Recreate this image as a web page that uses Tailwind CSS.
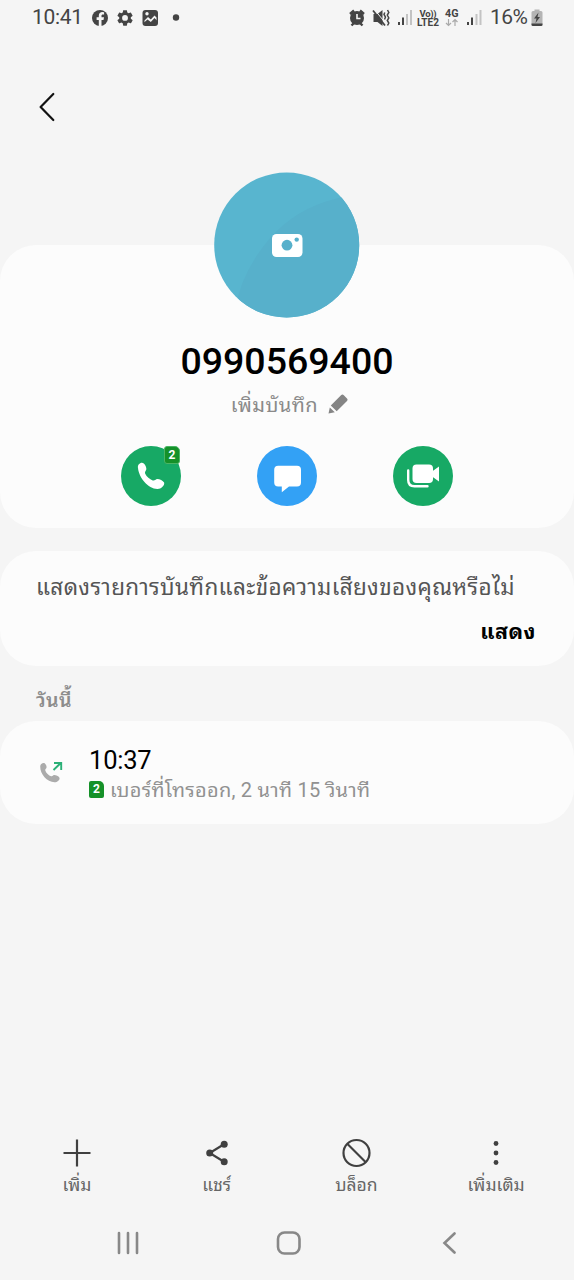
<!DOCTYPE html>
<html lang="th">
<head>
<meta charset="utf-8">
<title>0990569400</title>
<script src="https://cdn.jsdelivr.net/npm/@tailwindcss/browser@4"></script>
</head>
<body class="bg-[#f5f5f5]">
<div class="w-[574px] h-[1280px] flex flex-col overflow-hidden bg-[#f5f5f5] font-[Roboto,'Noto_Sans_Thai_Looped','Noto_Looped_Thai','Droid_Sans_Thai',Loma,Waree,Garuda,'Noto_Sans_Thai',sans-serif] text-[#444]">

  <!-- status bar -->
  <header class="h-9 shrink-0 flex justify-between pl-8 pr-[30px]">
    <div class="flex items-center">
      <span class="w-[60px] text-[21px] leading-[34px] h-9 whitespace-nowrap tracking-[-0.3px]">10:41</span>
      <svg class="w-[92px] h-9" viewBox="92 0 92 36" fill="#444">
        <circle cx="100" cy="18" r="8"/>
        <path d="M98.8 26.5v-6.6h-2.2v-2.6h2.2v-1.6c0-2.4 1.5-3.6 3.5-3.6l1.8.2v2.2h-1.2c-1.1 0-1.4.6-1.4 1.4v1.4h2.5l-.5 2.6h-2v6.6z" fill="#f5f5f5"/>
        <g transform="translate(115.3 8.2) scale(.81)"><path d="M19.14 12.94c.04-.3.06-.61.06-.94s-.02-.64-.07-.94l2.03-1.58a.5.5 0 0 0 .12-.61l-1.92-3.32a.49.49 0 0 0-.59-.22l-2.39.96a7 7 0 0 0-1.62-.94l-.36-2.54a.48.48 0 0 0-.48-.41h-3.84c-.24 0-.43.17-.47.41l-.36 2.54c-.59.24-1.13.57-1.62.94l-2.39-.96a.48.48 0 0 0-.59.22L2.74 8.87c-.12.21-.08.47.12.61l2.03 1.58a7.3 7.3 0 0 0 0 1.88l-2.03 1.58a.5.5 0 0 0-.12.61l1.92 3.32c.12.22.37.29.59.22l2.39-.96c.5.38 1.03.7 1.62.94l.36 2.54c.05.24.24.41.48.41h3.84c.24 0 .44-.17.47-.41l.36-2.54a7 7 0 0 0 1.62-.94l2.39.96c.22.08.47 0 .59-.22l1.92-3.32a.48.48 0 0 0-.12-.61zM12 15.6a3.6 3.6 0 1 1 0-7.2 3.6 3.6 0 0 1 0 7.2z"/></g>
        <rect x="142.500" y="10" width="15.500" height="16" rx="3"/>
        <path d="M144.500 22.500v-2l3.500-3.500 2.800 2.500 3.700-4 2 2v5z" fill="#f5f5f5"/><circle cx="147" cy="13.700" r="1.700" fill="#f5f5f5"/>
        <path d="M144 24v-1.500l3.500-3 3.300 2.500 3.700-4 2.500 2.500V24z"/>
        <circle cx="176" cy="17.500" r="3.200"/>
      </svg>
    </div>
    <div class="flex items-center">
      <svg class="w-[143px] h-9" viewBox="347 0 143 36" fill="#444">
        <circle cx="357" cy="18" r="7"/>
        <path d="M350 14l4-3.500M364 14l-4-3.500M351.500 25.500l2.500-2.500M362.500 25.500l-2.500-2.500" stroke="#444" stroke-width="2.400" fill="none"/>
        <path d="M357 14v4.500h3.500" stroke="#f5f5f5" stroke-width="1.600" fill="none"/>
        <path d="M373.500 14h4l5-4v16l-5-4h-4z"/>
        <path d="M373.800 9l13 15.500" stroke="#f5f5f5" stroke-width="1"/><path d="M373 10.500l12 15" stroke="#444" stroke-width="1.800"/>
        <path d="M387.500 10l1.300 2.500-1.500 2.500 1.500 3-1.500 2.500 1.500 2.500-1.300 2.500M384.800 12.500l-.8 2 1.500 2.500-1 2.500" stroke="#444" stroke-width="1.500" fill="none"/>
        <path d="M398 22h2v3h-2zM402 17.500h2v7.500h-2z"/><path d="M406 14h2v11h-2zM410 10h2v15h-2z" fill="#c3c3c3"/>
        <text x="419.500" y="16.500" font-size="9.500" font-weight="700" textLength="17">Vo))</text>
        <text x="417" y="25.500" font-size="10" font-weight="700" textLength="22" lengthAdjust="spacingAndGlyphs">LTE2</text>
        <text x="445" y="17" font-size="10.500" font-weight="700" textLength="13.500" lengthAdjust="spacingAndGlyphs">4G</text>
        <path d="M448.500 19v6.500m-2.500-2.500l2.500 2.500 2.500-2.500M455 26v-6.500m-2.500 2.500l2.500-2.500 2.500 2.500" stroke="#aaa" stroke-width="1.200" fill="none"/>
        <path d="M467 22h2v3h-2zM471 17.500h2v7.500h-2z"/><path d="M475.500 14h2v11h-2zM479.500 10h2v15h-2z" fill="#c3c3c3"/>
      </svg>
      <span class="w-[40px] text-[21px] leading-[34px] h-9 whitespace-nowrap tracking-[-0.5px]">16%</span>
      <svg class="w-[14px] h-9" viewBox="530 0 14 36">
        <path d="M534.500 9.500h5v1.500h1.500a1.500 1.500 0 0 1 1.500 1.500v13h-11v-13a1.500 1.500 0 0 1 1.500-1.500h1.500z" fill="#b4b4b4"/>
        <path d="M531.500 23.500h11v1a1.500 1.500 0 0 1-1.500 1.500h-8a1.500 1.500 0 0 1-1.500-1.500zM538.500 12.500l-4.500 6h2.500l-1 4.500 4.500-6h-2.500z" fill="#444"/>
      </svg>
    </div>
  </header>

  <div class="h-[209px] shrink-0 pl-8 pt-[55px]">
    <svg class="w-8 h-8" viewBox="32 91 32 32" fill="none" stroke="#111" stroke-width="2.200" stroke-linecap="round" stroke-linejoin="round"><path d="M53.300 94L40.600 107l12.700 13"/></svg>
  </div>

  <!-- contact card -->
  <section class="h-[283px] shrink-0 bg-[#fcfcfc] rounded-[36px] flex flex-col items-center">
    <svg class="w-[146px] h-[146px] -mt-[73px] shrink-0" viewBox="0 0 146 146">
      <defs><clipPath id="av"><circle cx="72.700" cy="73" r="72.500"/></clipPath></defs>
      <g clip-path="url(#av)">
        <rect width="146" height="146" fill="#58b5cf"/>
        <path d="M20 146Q24 104 56 66Q82 37 119 27.500L146 20V146z" fill="#57b0cb"/>
      </g>
      <rect x="58" y="62" width="30.500" height="23" rx="4.500" fill="#fff"/>
      <circle cx="73" cy="73.200" r="5.400" fill="#57b0cb"/><circle cx="82.700" cy="67.600" r="2.200" fill="#57b0cb"/>
    </svg>
    <h1 class="h-[46px] mt-5 text-[37.5px] leading-[46px] font-medium text-black">0990569400</h1>
    <div class="h-[38px] pt-1 pl-[5px] flex items-center gap-[10px] text-[#8a8a8a]">
      <span class="text-[20px] leading-[34px] whitespace-nowrap tracking-[0.5px]">เพิ่มบันทึก</span>
      <svg class="w-5 h-5 -mt-[3px]" viewBox="0 0 20 20" fill="#858585"><path d="M2.800 11.500L13 1.200q1.500-1.300 2.800 0l3.200 3.200q1.200 1.300 0 2.500L8.700 17.300zM1.800 13.500l5 4.800L.5 19.500z"/></svg>
    </div>
    <div class="mt-[24px] w-[332px] flex justify-between">
      <button class="relative w-[60px] h-[60px] rounded-full bg-[#17a965]">
        <svg class="w-[60px] h-[60px]" viewBox="0 0 60 60" fill="#fff"><path d="M17 22c-.8-3.500 3.200-6.500 5.800-4.500 1.700 1.500 2.900 4.200 2.500 6-.4 1.700-1.900 2.300-1.100 4.200 1.500 3 4.500 5.600 7.500 6.700 2 .7 2.500-1 4.200-1.400 2.200-.3 6 1.500 7.200 3.600 1 3-3.300 6.700-6.700 6.500C27 42.500 18 32 17 22z"/></svg>
        <span class="absolute left-[43px] top-0 w-4 h-[18px] rounded-[3px] rounded-tr-[5px] bg-[#159129] border border-[#4ab565] text-white text-[12px] leading-4 font-bold text-center">2</span>
      </button>
      <button class="w-[60px] h-[60px] rounded-full bg-[#33a1f5]">
        <svg class="w-[60px] h-[60px]" viewBox="0 0 60 60" fill="#fff"><path d="M21.200 19.700H40q4 0 4 4V36.500q0 4-4 4H32L24.800 46.300V40.500H21.200q-4 0-4-4V23.700q0-4 4-4z"/></svg>
      </button>
      <button class="w-[60px] h-[60px] rounded-full bg-[#17a965]">
        <svg class="w-[60px] h-[60px]" viewBox="0 0 60 60" fill="#fff"><rect x="19.500" y="18.500" width="20.500" height="18.500" rx="4"/><path d="M39 25.500l7-5v15L39 30.500z"/><path d="M15.200 24.500v9.500q0 6.300 6.300 6.300H34.500" fill="none" stroke="#fff" stroke-width="2.400" stroke-linecap="round"/></svg>
      </button>
    </div>
  </section>

  <section class="h-[115px] mt-[23px] shrink-0 bg-[#fcfcfc] rounded-[36px] px-9 pt-[18px]">
    <p class="h-9 leading-[37px] text-[22.5px] tracking-[0.35px] text-[#555] whitespace-nowrap">แสดงรายการบันทึกและข้อความเสียงของคุณหรือไม่</p>
    <p class="h-9 mt-[9px] mr-[2px] leading-9 text-[21.5px] tracking-[0.5px] font-bold text-black text-right">แสดง</p>
  </section>

  <h2 class="h-[55px] shrink-0 pl-9 pt-[17px] leading-9 text-[19.5px] tracking-[0.4px] font-semibold text-[#8c8c8c]">วันนี้</h2>

  <section class="h-[103px] shrink-0 bg-[#fcfcfc] rounded-[36px] flex pl-9">
    <svg class="w-[53px] h-[103px]" viewBox="36 721 53 103"><path d="M40.200 766.500c0-2.500 3-4.200 4.700-3 1.200 1.200 2 3 1.600 4.200-.4 1-1.600 1.500-1.200 2.700.9 2.600 3.400 5 5.900 5.900 1.300.4 1.700-1 2.700-1.200 1.700-.2 4.500 1 5.600 2.600.7 2.200-2.500 4.700-5 4.600-7.500-.5-14.300-8-14.300-15.800z" fill="#ababab"/><path d="M53.500 770l7-6.800M54 763h7.200v7" fill="none" stroke="#2bb077" stroke-width="1.900"/></svg>
    <div class="pt-6">
      <p class="h-[30px] leading-[30px] text-[25.5px] text-black tracking-[-0.2px]">10:37</p>
      <p class="h-[30px] flex items-center gap-[6px] leading-[30px] text-[20px] text-[#919191] whitespace-nowrap"><span class="w-[15px] h-[17px] -mt-px rounded-[2px] rounded-tr-[5px] bg-[#159129] text-white text-[12px] leading-[17px] font-bold text-center">2</span><span class="tracking-[0.25px] leading-[31px]">เบอร์ที่โทรออก, 2 นาที 15 วินาที</span></p>
    </div>
  </section>

  <!-- actions -->
  <nav class="mt-auto h-[76px] shrink-0 grid grid-cols-4 pl-[7px] pr-2 text-center text-[17.5px] leading-8 text-[#666] whitespace-nowrap">
    <div class="flex flex-col items-center"><svg class="w-8 h-8" viewBox="0 0 32 32" stroke="#404040" stroke-width="2.200"><path d="M16 2.500v27M2.500 16h27"/></svg><span>เพิ่ม</span></div>
    <div class="flex flex-col items-center"><svg class="w-8 h-8" viewBox="0 0 32 32" fill="#404040"><path d="M23 7.300L8.700 16 23 24.700" fill="none" stroke="#404040" stroke-width="2.200"/><circle cx="23.200" cy="7.300" r="3.500"/><circle cx="8.700" cy="16" r="3.500"/><circle cx="23.200" cy="24.700" r="3.500"/></svg><span>แชร์</span></div>
    <div class="flex flex-col items-center"><svg class="w-8 h-8" viewBox="0 0 32 32" fill="none" stroke="#404040" stroke-width="2.200"><circle cx="16.500" cy="16" r="13"/><path d="M7.500 7l18 18"/></svg><span>บล็อก</span></div>
    <div class="flex flex-col items-center"><svg class="w-8 h-8" viewBox="0 0 32 32" fill="#404040"><circle cx="16" cy="6.500" r="2.400"/><circle cx="16" cy="16" r="2.400"/><circle cx="16" cy="25.500" r="2.400"/></svg><span>เพิ่มเติม</span></div>
  </nav>
  <footer class="h-[67px] shrink-0">
    <svg class="w-[574px] h-[67px]" viewBox="0 1213 574 67" fill="none" stroke="#888" stroke-width="2.600" stroke-linecap="round"><path d="M119 1233v20M128 1233v20M137 1233v20M454.500 1233.500l-10 9.500 10 9.500"/><rect x="278" y="1232.500" width="21.500" height="21" rx="6.500"/></svg>
  </footer>
</div>
</body>
</html>
